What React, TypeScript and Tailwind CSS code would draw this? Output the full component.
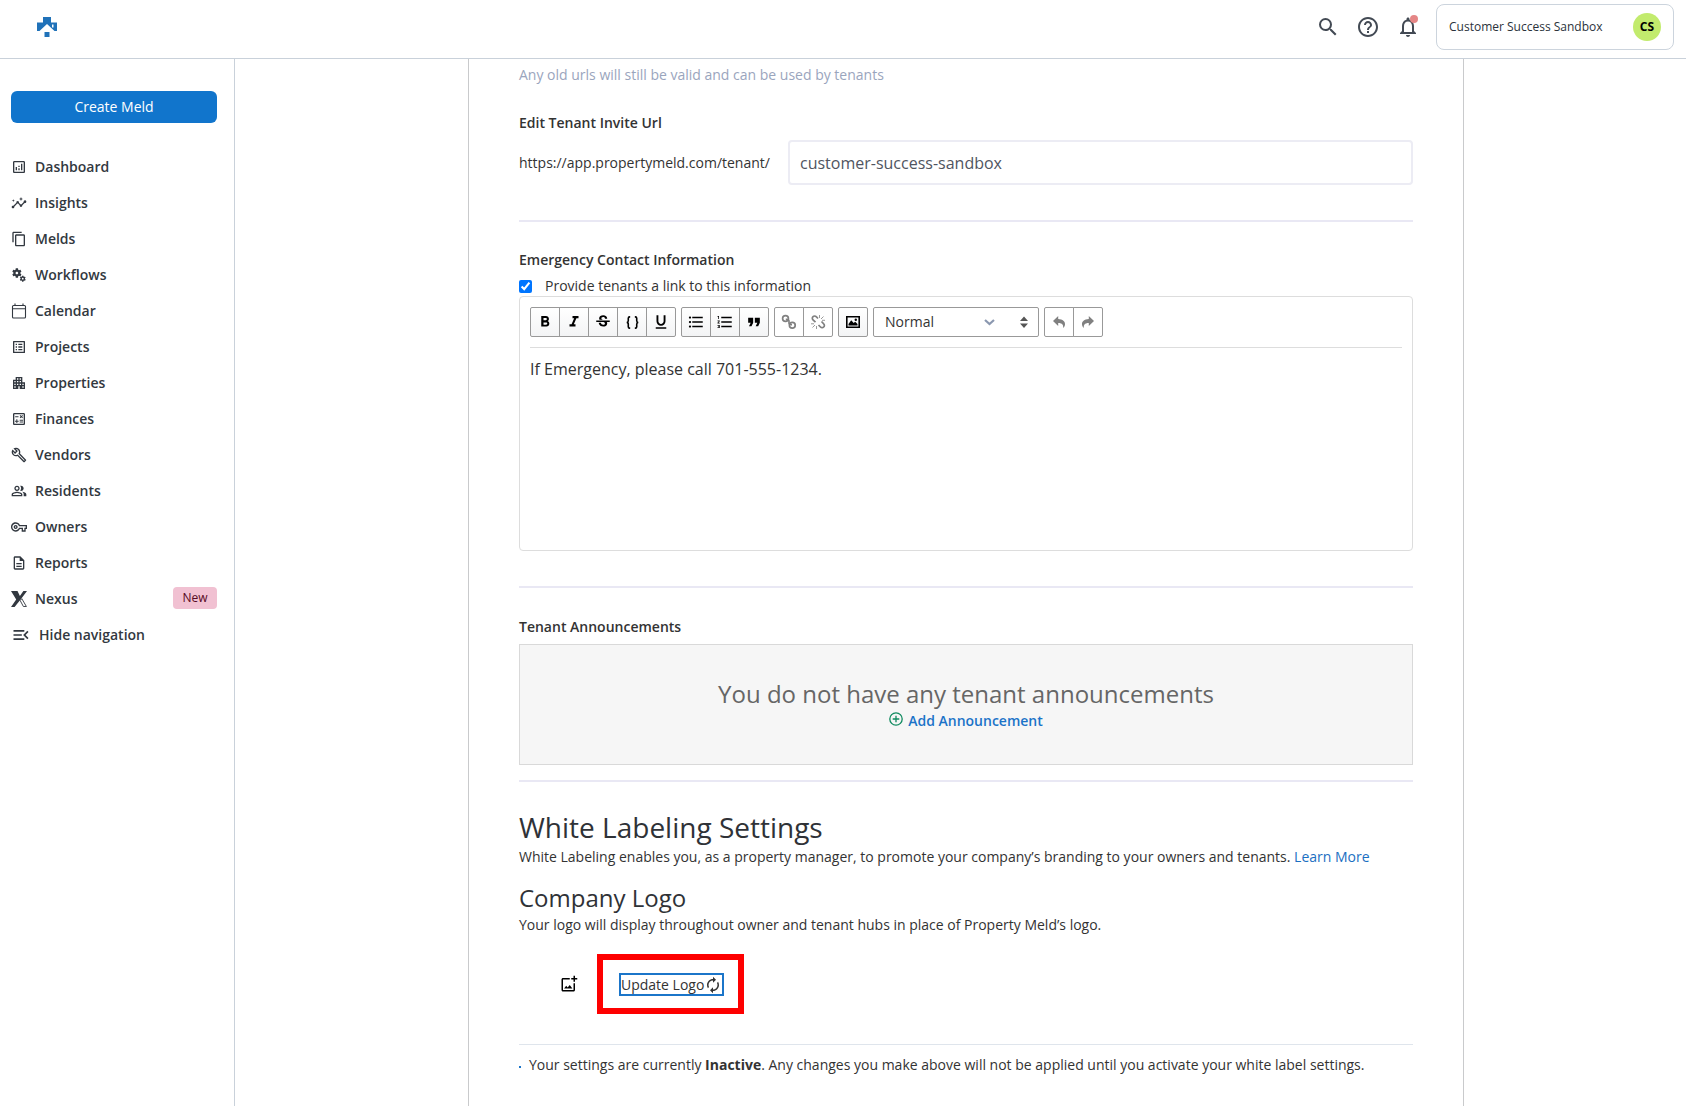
import React from "react";
import { IconType } from "react-icons";
import {
  MdApartment,
  MdAutorenew,
  MdContentCopy,
  MdFormatBold,
  MdFormatItalic,
  MdFormatListBulleted,
  MdFormatListNumbered,
  MdFormatQuote,
  MdFormatUnderlined,
  MdHelpOutline,
  MdInsights,
  MdMenuOpen,
  MdMiscellaneousServices,
  MdNotificationsNone,
  MdOutlineAddPhotoAlternate,
  MdOutlineAnalytics,
  MdOutlineBuild,
  MdOutlineCalculate,
  MdOutlineDescription,
  MdOutlineListAlt,
  MdOutlinePeopleAlt,
  MdOutlineVpnKey,
  MdSearch,
  MdStrikethroughS,
} from "react-icons/md";

type IconProps = { className?: string };

const NexusIcon = ({ className }: IconProps) => (
  <svg viewBox="0 0 16 16" className={className} fill="currentColor">
    <path d="M0 0h6.500l2.400 5L12.400 0H16l-5.600 7.6L8.400 10 3.600 16H0l5.200-7.4z" />
    <path
      d="M9.2 9.6l1.6-1.9 4.6 7.8h-3z"
      fill="none"
      stroke="currentColor"
      strokeWidth="0.9"
    />
  </svg>
);

const CalendarIcon = ({ className }: IconProps) => (
  <svg
    viewBox="0 0 16 16"
    className={className}
    fill="none"
    stroke="currentColor"
    strokeWidth="1.1"
  >
    <rect x="1.500" y="2.500" width="13" height="12.500" rx="1" />
    <path d="M1.500 5.700h13M4 .5v2M12 .5v2" />
  </svg>
);

const Logo = () => (
  <svg viewBox="0 0 20 20" className="size-5" fill="#2072b9">
    <path d="M6 0h8v5.500h6V14h-2.500L10 7 2.500 14H0V5.500h6z" />
    <path d="M15 7.500h1.500v3H15z" fill="#fff" />
    <path d="M7.500 15h5v5h-5z" />
  </svg>
);

const BracesIcon = ({ className }: IconProps) => (
  <svg
    viewBox="0 0 16 16"
    className={className}
    fill="none"
    stroke="currentColor"
    strokeWidth="1.700"
  >
    <path d="M5.500 2H5Q3.500 2 3.500 3.500v2.700Q3.500 8 1.800 8 3.500 8 3.500 9.800v2.700Q3.500 14 5 14h.5" />
    <path d="M10.500 2h.5q1.500 0 1.500 1.500v2.700q0 1.800 1.700 1.800-1.700 0-1.700 1.800v2.700Q12.500 14 11 14h-.5" />
  </svg>
);

const ChainIcon = ({ className }: IconProps) => (
  <svg
    viewBox="0 0 16 16"
    className={className}
    fill="none"
    stroke="currentColor"
    strokeWidth="1.700"
  >
    <circle cx="4.500" cy="4.500" r="2.900" />
    <circle cx="11.300" cy="11.300" r="2.900" />
    <path d="M4.800 5.300Q8.500 5.200 8 8t3 2.600" />
  </svg>
);

const BrokenChainIcon = ({ className }: IconProps) => (
  <svg
    viewBox="0 0 16 16"
    className={className}
    fill="none"
    stroke="currentColor"
    strokeWidth="1.700"
  >
    <path d="M8 4.500L6.200 2.700a2.200 2.200 0 0 0-3.200 0 2.200 2.200 0 0 0 0 3.200L5.500 8.200M8.500 11l2 2a2.200 2.200 0 0 0 3.200 0 2.200 2.200 0 0 0 0-3.200L11.500 7.500" />
    <path
      d="M9.500 4V1M11 5l2.500-2.500M12 6.300h3M6.500 12v3M5 11l-2.500 2.500M4 9.800H1"
      strokeWidth="0.8"
    />
  </svg>
);

const ImageIcon = ({ className }: IconProps) => (
  <svg viewBox="0 0 16 16" className={className} fill="currentColor">
    <path
      fillRule="evenodd"
      d="M1 2h14v12H1zM2.600 3.600v8.800h10.800V3.600z"
    />
    <path d="M3.500 11.500V10l2.700-3.800L8.700 9l1.500-1.200 2.300 2.200v1.500z" />
    <circle cx="10.800" cy="5.800" r="1.200" />
  </svg>
);

const UndoIcon = ({ className }: IconProps) => (
  <svg viewBox="0 0 16 16" className={className} fill="currentColor">
    <path d="M7.200 2v3.100c4.600.2 7 2.400 6.800 5.400-.1 1.400-.8 2.500-2 3.500.7-3-.5-5.100-4.800-5.100V12L2 7z" />
  </svg>
);

const PlusCircle = () => (
  <svg
    viewBox="0 0 14 14"
    className="mb-1 size-[14px]"
    fill="none"
    stroke="#0f8a5f"
    strokeWidth="1.300"
  >
    <circle cx="7" cy="7" r="6.200" />
    <path d="M7 3.700v6.600M3.700 7h6.600" />
  </svg>
);

const navItems: {
  label: string;
  icon: IconType | React.FC<IconProps>;
  badge?: string;
}[] = [
  { label: "Dashboard", icon: MdOutlineAnalytics },
  { label: "Insights", icon: MdInsights },
  { label: "Melds", icon: MdContentCopy },
  { label: "Workflows", icon: MdMiscellaneousServices },
  { label: "Calendar", icon: CalendarIcon },
  { label: "Projects", icon: MdOutlineListAlt },
  { label: "Properties", icon: MdApartment },
  { label: "Finances", icon: MdOutlineCalculate },
  { label: "Vendors", icon: MdOutlineBuild },
  { label: "Residents", icon: MdOutlinePeopleAlt },
  { label: "Owners", icon: MdOutlineVpnKey },
  { label: "Reports", icon: MdOutlineDescription },
  { label: "Nexus", icon: NexusIcon, badge: "New" },
];

const Header = () => {
  return (
    <header className="flex h-[59px] shrink-0 items-start justify-between border-b border-[#c9d1da] bg-white pr-3 pl-[37px]">
      <a href="#home" aria-label="Home" className="mt-[17px]">
        <Logo />
      </a>
      <div className="mt-1 flex items-center gap-4 text-[#434a54]">
        <button aria-label="Search">
          <MdSearch className="size-6" />
        </button>
        <button aria-label="Help">
          <MdHelpOutline className="size-6" />
        </button>
        <button aria-label="Notifications" className="relative">
          <MdNotificationsNone className="size-6" />
          <span className="absolute top-0 right-[2px] size-2 rounded-full bg-[#e58686]" />
        </button>
        <button className="flex h-[46px] w-[238px] items-center justify-between rounded-lg border border-[#ccd4dd] px-3 text-xs font-medium text-[#2b323b]">
          Customer Success Sandbox
          <span className="flex size-7 items-center justify-center rounded-full bg-[#c2eb6d] font-bold text-black">
            CS
          </span>
        </button>
      </div>
    </header>
  );
};

const Sidebar = () => {
  return (
    <aside className="w-[235px] shrink-0 border-r border-[#c9d1da] pt-8 pr-[17px] pl-[11px] text-sm font-semibold text-[#323840]">
      <button className="h-8 w-full rounded-md bg-[#1175cc] font-medium text-white">
        Create Meld
      </button>
      <nav className="mt-[26px]">
        {navItems.map(({ label, icon: Icon, badge }) => (
          <a key={label} href="#nav" className="flex h-9 items-center gap-2">
            <Icon className="size-4" />
            {label}
            {badge && (
              <span className="mb-[2px] ml-auto flex h-[22px] w-11 items-center justify-center rounded-sm bg-[#f1c1d2] text-xs font-medium text-[#570a24]">
                {badge}
              </span>
            )}
          </a>
        ))}
        <button className="flex h-9 items-center gap-2">
          <MdMenuOpen className="size-5" />
          Hide navigation
        </button>
      </nav>
    </aside>
  );
};

const Divider = () => <hr className="border-t-2 border-[#e9e8f4]" />;

const ToolButton = ({
  label,
  disabled,
  children,
}: {
  label: string;
  disabled?: boolean;
  children: React.ReactNode;
}) => (
  <button
    aria-label={label}
    disabled={disabled}
    className="-ml-px flex h-[30px] w-[30px] items-center justify-center border border-[#999] bg-linear-to-b from-white to-[#f3f4f5] text-black first:ml-0 first:rounded-l-xs last:rounded-r-xs disabled:from-white disabled:to-white disabled:text-[#808080]"
  >
    {children}
  </button>
);

const Toolbar = () => {
  return (
    <div className="flex flex-wrap gap-[5px] border-b border-[#ddd] pb-[10px]">
      <div className="flex">
        <ToolButton label="Bold">
          <MdFormatBold className="size-[18px]" />
        </ToolButton>
        <ToolButton label="Italic">
          <MdFormatItalic className="size-[18px]" />
        </ToolButton>
        <ToolButton label="Strikethrough">
          <MdStrikethroughS className="size-[18px]" />
        </ToolButton>
        <ToolButton label="Monospace">
          <BracesIcon className="size-[15px]" />
        </ToolButton>
        <ToolButton label="Underline">
          <MdFormatUnderlined className="size-[18px]" />
        </ToolButton>
      </div>
      <div className="flex">
        <ToolButton label="Bulleted list">
          <MdFormatListBulleted className="size-[18px]" />
        </ToolButton>
        <ToolButton label="Numbered list">
          <MdFormatListNumbered className="size-[18px]" />
        </ToolButton>
        <ToolButton label="Blockquote">
          <MdFormatQuote className="size-5" />
        </ToolButton>
      </div>
      <div className="flex">
        <ToolButton label="Link" disabled>
          <ChainIcon className="size-4" />
        </ToolButton>
        <ToolButton label="Remove link" disabled>
          <BrokenChainIcon className="size-4" />
        </ToolButton>
      </div>
      <div className="flex">
        <ToolButton label="Image">
          <ImageIcon className="size-4" />
        </ToolButton>
      </div>
      <div className="relative">
        <select
          aria-label="Block type"
          className="h-[30px] w-[166px] appearance-none rounded-xs border border-[#999] bg-white pl-[11px] text-sm text-[#333]"
        >
          <option>Normal</option>
        </select>
        <svg
          viewBox="0 0 44 12"
          className="pointer-events-none absolute top-[9px] right-[11px] h-3 w-11"
        >
          <path
            d="M1 4l4.500 4L10 4"
            fill="none"
            stroke="#8b98b0"
            strokeWidth="2.200"
          />
          <path d="M36 5l4-4.500L44 5zM36 7.500h8L40 12z" fill="#555" />
        </svg>
      </div>
      <div className="flex">
        <ToolButton label="Undo" disabled>
          <UndoIcon className="size-4" />
        </ToolButton>
        <ToolButton label="Redo" disabled>
          <UndoIcon className="size-4 -scale-x-100" />
        </ToolButton>
      </div>
    </div>
  );
};

const TenantSettings = () => {
  return (
    <section>
      <p className="pt-[6px] leading-5 text-[#9aa5bd]">
        Any old urls will still be valid and can be used by tenants
      </p>
      <label htmlFor="invite-url" className="mt-7 block leading-5 font-semibold">
        Edit Tenant Invite Url
      </label>
      <div className="mt-[7px] mb-[35px] flex items-center">
        <span className="w-[269px] shrink-0">
          https://app.propertymeld.com/tenant/
        </span>
        <input
          id="invite-url"
          defaultValue="customer-success-sandbox"
          className="h-[45px] min-w-0 flex-1 rounded-sm border-2 border-[#ececf4] px-[10px] text-base text-[#50555f]"
        />
      </div>
      <Divider />

      <h3 className="mt-7 leading-5 font-semibold">
        Emergency Contact Information
      </h3>
      <div className="mt-[6px] flex h-5 items-center">
        <input
          id="provide-link"
          type="checkbox"
          defaultChecked
          className="size-[13px] accent-[#0075ff]"
        />
        <label htmlFor="provide-link" className="ml-[13px]">
          Provide tenants a link to this information
        </label>
      </div>
      <div className="mb-[35px] h-[255px] rounded-sm border border-[#ddd] p-[10px]">
        <Toolbar />
        <div className="mt-[9px] text-base leading-6">
          If Emergency, please call 701-555-1234.
        </div>
      </div>
      <Divider />

      <h3 className="mt-[29px] leading-5 font-semibold">
        Tenant Announcements
      </h3>
      <div className="mt-[7px] mb-[15px] flex h-[121px] flex-col items-center border border-[#d9d9d9] bg-[#f6f6f6] pt-8">
        <p className="text-2xl leading-[34px] text-[#666]">
          You do not have any tenant announcements
        </p>
        <a
          href="#add"
          className="flex items-center gap-[5px] leading-5 font-semibold text-[#1b73c8]"
        >
          <PlusCircle />
          Add Announcement
        </a>
      </div>
      <Divider />
    </section>
  );
};

const WhiteLabel = () => {
  return (
    <section>
      <h1 className="mt-[26px] text-[28px] leading-[39px] text-[#2f3237]">
        White Labeling Settings
      </h1>
      <p className="leading-5">
        White Labeling enables you, as a property manager, to promote your
        company’s branding to your owners and tenants.{" "}
        <a href="#learn" className="text-[#1b6fc2]">
          Learn More
        </a>
      </p>
      <h2 className="mt-[14px] text-2xl leading-[34px] text-[#2f3237]">
        Company Logo
      </h2>
      <p className="leading-5">
        Your logo will display throughout owner and tenant hubs in place of
        Property Meld’s logo.
      </p>
      <div className="mt-[19px] mb-[30px] flex items-center pl-[41px]">
        <MdOutlineAddPhotoAlternate className="size-[18px] text-black" />
        <div className="ml-[19px] border-[6px] border-[#fe0000] pt-[13px] pr-[14px] pb-3 pl-4">
          <button className="flex h-[23px] items-center border-2 border-[#1b75c9]">
            Update Logo
            <MdAutorenew className="size-[18px]" />
          </button>
        </div>
      </div>
      <hr className="border-[#dfe5ec]" />
      <p className="mt-[10px] flex items-center leading-5">
        <span className="mt-1 mr-2 size-[2px] bg-[#1b75c9]" />
        <span>
          Your settings are currently <b>Inactive</b>. Any changes you make
          above will not be applied until you activate your white label
          settings.
        </span>
      </p>
    </section>
  );
};

const App = () => {
  return (
    <div className="flex h-screen flex-col overflow-hidden bg-white font-['Open_Sans',sans-serif] text-sm text-[#333]">
      <Header />
      <div className="flex min-h-0 flex-1">
        <Sidebar />
        <main className="flex min-w-0 flex-1 justify-center overflow-hidden pl-[11px]">
          <div className="w-full max-w-[996px] border-x border-[#c9cacc] px-[50px]">
            <TenantSettings />
            <WhiteLabel />
          </div>
        </main>
      </div>
    </div>
  );
};

export default App;
